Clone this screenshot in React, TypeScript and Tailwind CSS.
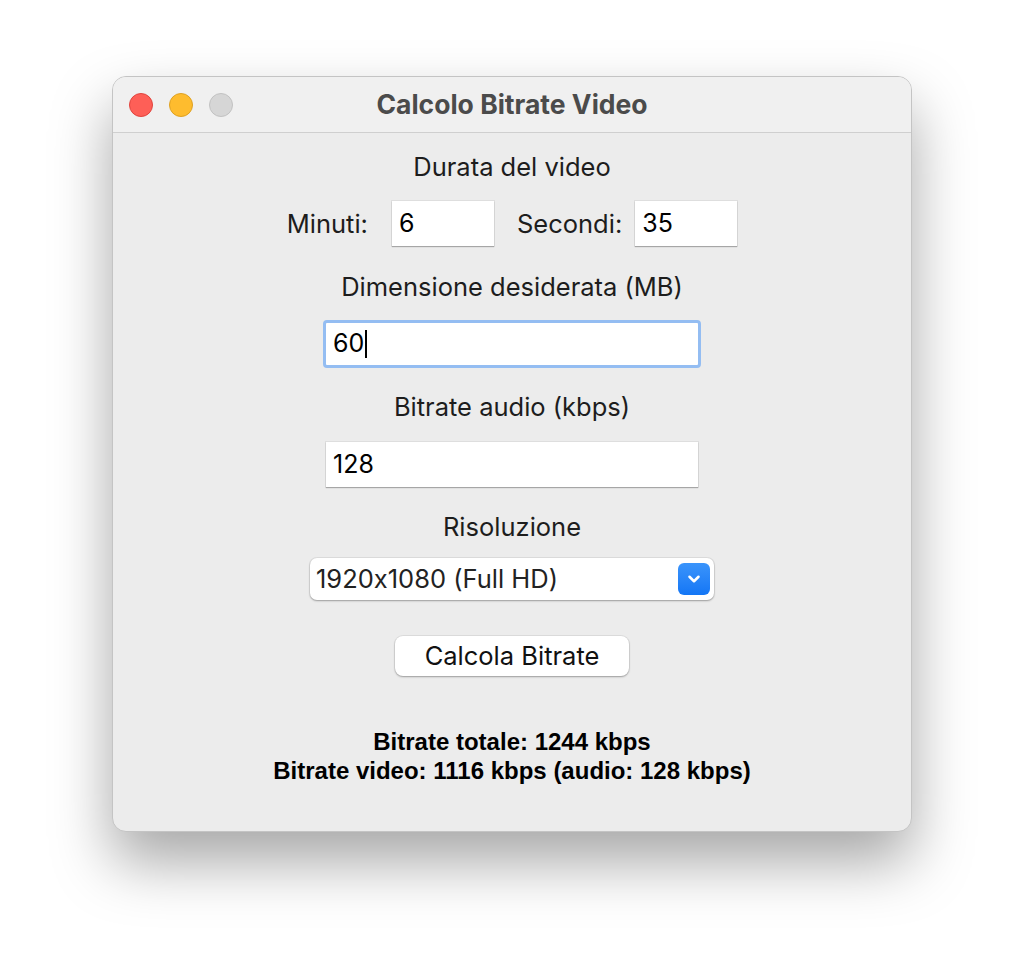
import { ChevronDown } from "lucide-react";

const sf = { fontFamily: 'Inter, "Noto Sans", sans-serif' };
const labelCls = "h-[28px] text-[25.5px] leading-[28px] text-[#1d1d1d] [font-feature-settings:'calt'_0]";
const inputCls =
  "bg-white shadow-[0_1px_1px_rgba(0,0,0,0.25),0_0_0_1px_rgba(0,0,0,0.06)] px-[7px] text-[25px] text-black flex items-center";

function TrafficLights() {
  return (
    <div className="flex items-center gap-[16px]">
      <span className="inline-block h-[24px] w-[24px] rounded-full border border-[#e0443e] bg-[#fe5f57]" />
      <span className="inline-block h-[24px] w-[24px] rounded-full border border-[#dea123] bg-[#febc2e]" />
      <span className="inline-block h-[24px] w-[24px] rounded-full border border-[#c2c2c2] bg-[#d6d6d6]" />
    </div>
  );
}

export default function App() {
  return (
    <div className="min-h-[980px] bg-white pt-[76px] [font-feature-settings:'calt'_0]" style={sf}>
      <div className="mx-auto flex h-[756px] w-[800px] flex-col overflow-hidden rounded-[14px] border border-[#c4c4c4] bg-[#ececec] shadow-[0_30px_60px_rgba(0,0,0,0.35)]">
        <div className="relative flex h-[56px] shrink-0 items-center border-b border-[#cfcfcf] bg-[#f0f0f0] pl-[16px]">
          <TrafficLights />
          <div className="absolute inset-0 flex items-center justify-center text-[26.5px] font-bold text-[#4b4b4b]">
            Calcolo Bitrate Video
          </div>
        </div>

        <div className="flex flex-col items-center pt-[20px]">
          <div className={labelCls}>Durata del video</div>

          <div className="mt-[20px] flex h-[45px] items-center">
            <span className={labelCls + " mr-[24px]"}>Minuti:</span>
            <div className={inputCls + " h-[45px] w-[102px]"}>6</div>
            <span className={labelCls + " ml-[23px] mr-[13px]"}>Secondi:</span>
            <div className={inputCls + " h-[45px] w-[102px]"}>35</div>
          </div>

          <div className={labelCls + " mt-[27px]"}>Dimensione desiderata (MB)</div>

          <div className="mt-[19px] flex h-[48px] w-[378px] items-center rounded-[4px] border-[3px] border-[#94bdf2] bg-white pl-[7px] text-[25px] text-black">
            <span>60</span>
            <span className="ml-[1px] inline-block h-[28px] w-[2px] bg-black" />
          </div>

          <div className={labelCls + " mt-[25px]"}>Bitrate audio (kbps)</div>

          <div className={inputCls + " mt-[21px] h-[45px] w-[372px]"}>128</div>

          <div className={labelCls + " mt-[26px]"}>Risoluzione</div>

          <div className="mt-[17px] flex h-[42px] w-[404px] items-center justify-between rounded-[7px] bg-white pl-[6px] pr-[4px] text-[25.5px] text-[#222] shadow-[0_1px_2px_rgba(0,0,0,0.3),0_0_0_1px_rgba(0,0,0,0.06)]">
            <span>1920x1080 (Full HD)</span>
            <span className="flex h-[32px] w-[32px] items-center justify-center rounded-[6px] bg-gradient-to-b from-[#3a94fb] to-[#1376f5]">
              <ChevronDown className="h-[18px] w-[18px] text-white" strokeWidth={3.4} />
            </span>
          </div>

          <button
            type="button"
            className="mt-[36px] flex h-[40px] w-[234px] items-center justify-center rounded-[8px] bg-white text-[25.5px] text-[#111] shadow-[0_1px_2px_rgba(0,0,0,0.3),0_0_0_1px_rgba(0,0,0,0.06)]"
          >
            Calcola Bitrate
          </button>

          <div
            className="mt-[51px] text-center text-[24px] leading-[29px] font-bold text-black"
            style={{ fontFamily: '"Liberation Sans", Arial, sans-serif' }}
          >
            <div>Bitrate totale: 1244 kbps</div>
            <div>Bitrate video: 1116 kbps (audio: 128 kbps)</div>
          </div>
        </div>
      </div>
    </div>
  );
}
